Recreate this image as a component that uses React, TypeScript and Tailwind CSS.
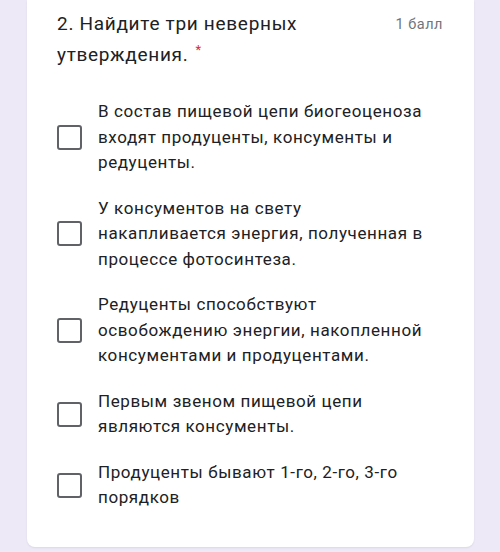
const options = [
  "В состав пищевой цепи биогеоценоза входят продуценты, консументы и редуценты.",
  "У консументов на свету накапливается энергия, полученная в процессе фотосинтеза.",
  "Редуценты способствуют освобождению энергии, накопленной консументами и продуцентами.",
  "Первым звеном пищевой цепи являются консументы.",
  "Продуценты бывают 1-го, 2-го, 3-го порядков",
];

function Checkbox() {
  return (
    <div className="w-[25px] h-[25px] shrink-0 rounded-[3px] border-[2.5px] border-[#5f6368] bg-white" />
  );
}

export default function App() {
  return (
    <div
      className="w-[500px] h-[552px] bg-[#ede9f6] overflow-hidden"
      style={{ fontFamily: "Roboto, 'Noto Sans', sans-serif" }}
    >
      <div className="ml-[27px] w-[447px] h-[547px] bg-white rounded-b-[8px] shadow-[0_1px_2px_rgba(0,0,0,0.08)] pl-[30px] pr-[31px] pt-[8px]">
        <div className="flex items-start justify-between">
          <h2 className="text-[19px] leading-[31px] tracking-[0.7px] text-[#202124] w-[320px]">
            2. Найдите три неверных утверждения.
            <span className="inline-block align-top ml-[7px] mt-[4px] text-[#d93025] text-[13px] leading-[13px]">
              *
            </span>
          </h2>
          <span className="text-[14.5px] leading-[31px] tracking-[0.5px] text-[#70757a] mt-[1px]">1 балл</span>
        </div>

        <div className="mt-[29px] flex flex-col gap-[20px]">
          {options.map((text) => (
            <label key={text} className="flex items-center gap-[16px]">
              <Checkbox />
              <span className="text-[17px] leading-[25.5px] tracking-[0.6px] text-[#202124] w-[330px]">
                {text}
              </span>
            </label>
          ))}
        </div>
      </div>
    </div>
  );
}
